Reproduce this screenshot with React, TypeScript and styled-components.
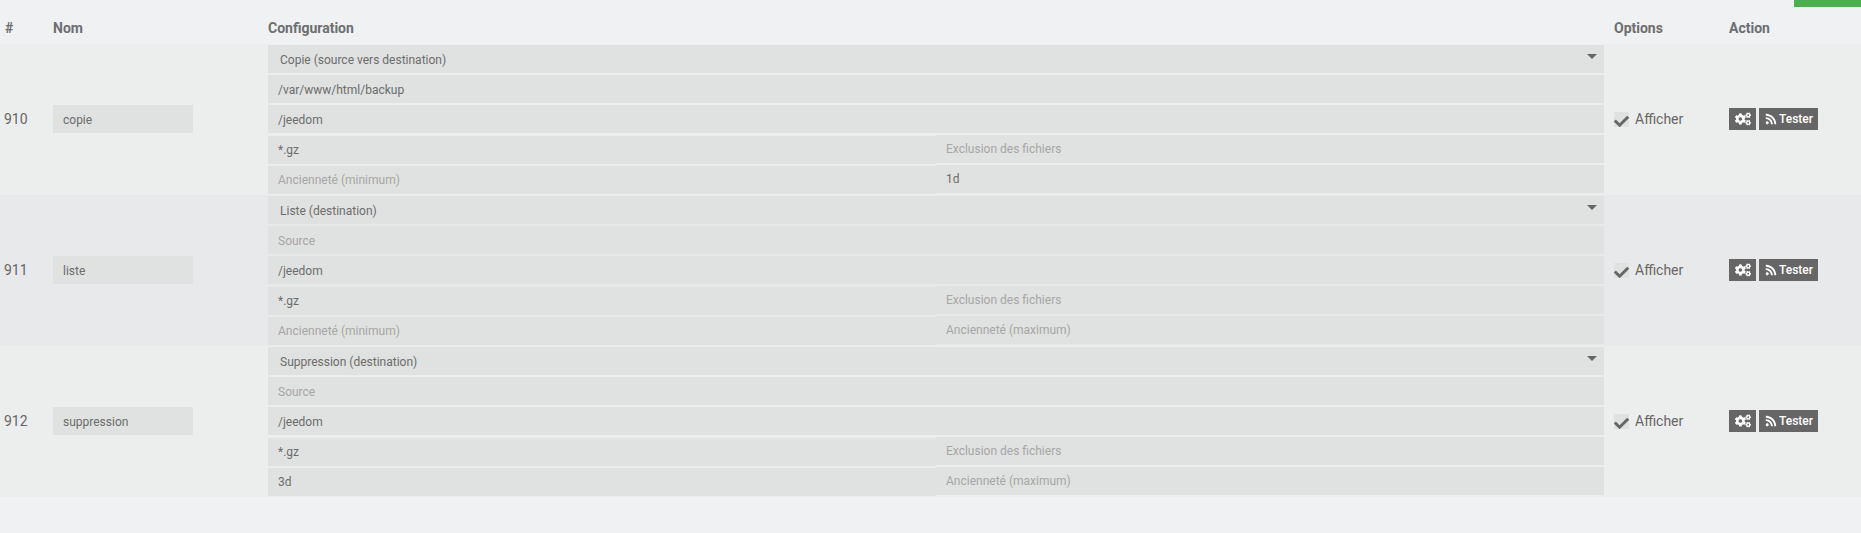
import { createGlobalStyle } from 'styled-components';
import styled from 'styled-components';
import { FaCheck, FaCogs, FaRss } from 'react-icons/fa';

const GlobalStyle = createGlobalStyle`
  html, body {
    margin: 0;
    padding: 0;
    height: 100%;
    background: #eff1f3;
    overflow: hidden;
  }
  body {
    font-family: Roboto, "Liberation Sans", sans-serif;
    color: #666;
  }
`;

const COLUMNS = '53px 215px 1346px 115px 132px';

const Page = styled.div`
  position: relative;
  width: 1861px;
  height: 533px;
`;

const GreenTab = styled.div`
  position: absolute;
  top: 0;
  right: 0;
  width: 67px;
  height: 7px;
  background: #4caf50;
`;

const HeadRow = styled.div`
  display: grid;
  grid-template-columns: ${COLUMNS};
  height: 44px;
  box-sizing: border-box;
  padding-top: 20px;
  font-size: 14px;
  line-height: 16px;
  font-weight: 700;
  color: #6e6e6e;
`;

const HeadCell = styled.div<{ $first?: boolean }>`
  padding-left: ${(p) => (p.$first ? '5px' : '0')};
`;

const Row = styled.div<{ $alt?: boolean }>`
  display: grid;
  grid-template-columns: ${COLUMNS};
  height: 151px;
  box-sizing: border-box;
  padding-bottom: 1px;
  align-items: center;
  background: ${(p) => (p.$alt ? '#e8e9ea' : '#eceeee')};
`;

const IdCell = styled.div`
  padding-left: 4px;
  font-size: 14px;
  color: #666;
`;

const Field = styled.input`
  display: block;
  box-sizing: border-box;
  width: 100%;
  height: 28px;
  margin: 0;
  padding: 1px 10px 0;
  border: 0;
  border-radius: 0;
  outline: 0;
  background: #e0e2e1;
  font-family: Roboto, "Liberation Sans", sans-serif;
  font-size: 12px;
  color: #6c6c6c;

  &::placeholder {
    color: #a6a6a6;
    opacity: 1;
  }
`;

const NameField = styled(Field)`
  width: 140px;
`;

const ConfigStack = styled.div`
  display: flex;
  flex-direction: column;
  gap: 2px;
  width: 1336px;
  height: 150px;
  box-sizing: border-box;
  padding-top: 1px;
`;

const SelectBox = styled.div`
  position: relative;
  box-sizing: border-box;
  height: 28px;
  padding: 1px 0 0 12px;
  background: #e0e2e1;
  font-size: 12px;
  line-height: 28px;
  color: #6c6c6c;
`;

const Caret = styled.span`
  position: absolute;
  top: 9px;
  right: 7px;
  width: 0;
  height: 0;
  border-left: 5px solid transparent;
  border-right: 5px solid transparent;
  border-top: 5px solid #666;
`;

const SplitLine = styled.div`
  display: grid;
  grid-template-columns: 668px 668px;
  height: 28px;
`;

const LeftField = styled(Field)`
  margin-top: 1px;
  padding-top: 0;
`;

const RightField = styled(Field)`
  padding-top: 0;
`;

const OptionLabel = styled.label`
  display: flex;
  align-items: center;
  gap: 6px;
  font-size: 14px;
  color: #666;
`;

const CheckBox = styled.span`
  position: relative;
  width: 15px;
  height: 15px;
  background: #e0e2e1;
  color: #666;

  svg {
    position: absolute;
    left: 0;
    top: 2px;
    width: 15px;
    height: 15px;
  }
`;

const ActionGroup = styled.div`
  display: flex;
  gap: 3px;
`;

const ActionButton = styled.button`
  display: flex;
  align-items: center;
  gap: 2px;
  width: 59px;
  height: 22px;
  padding: 0 0 0 6px;
  border: 0;
  border-radius: 0;
  background: #666;
  color: #fff;
  font-family: Roboto, "Liberation Sans", sans-serif;
  font-size: 12px;
  font-weight: 500;
`;

const IconButton = styled(ActionButton)`
  justify-content: center;
  width: 27px;
  padding: 0;
  font-size: 16px;
`;

type Job = {
  id: number;
  name: string;
  kind: string;
  source: string;
  destination: string;
  minAge: string;
  maxAge: string;
};

const jobs: Job[] = [
  { id: 910, name: 'copie', kind: 'Copie (source vers destination)', source: '/var/www/html/backup', destination: '/jeedom', minAge: '', maxAge: '1d' },
  { id: 911, name: 'liste', kind: 'Liste (destination)', source: '', destination: '/jeedom', minAge: '', maxAge: '' },
  { id: 912, name: 'suppression', kind: 'Suppression (destination)', source: '', destination: '/jeedom', minAge: '3d', maxAge: '' },
];

const App = () => {
  return (
    <Page>
      <GlobalStyle />
      <GreenTab />
      <HeadRow>
        <HeadCell $first>#</HeadCell>
        <HeadCell>Nom</HeadCell>
        <HeadCell>Configuration</HeadCell>
        <HeadCell>Options</HeadCell>
        <HeadCell>Action</HeadCell>
      </HeadRow>
      {jobs.map((job, i) => (
        <Row key={job.id} $alt={i === 1}>
          <IdCell>{job.id}</IdCell>
          <div>
            <NameField readOnly value={job.name} />
          </div>
          <ConfigStack>
            <SelectBox>
              {job.kind}
              <Caret />
            </SelectBox>
            <Field readOnly value={job.source} placeholder="Source" />
            <Field readOnly value={job.destination} placeholder="Destination" />
            <SplitLine>
              <LeftField readOnly value="*.gz" placeholder="Inclusion des fichiers" />
              <RightField readOnly value="" placeholder="Exclusion des fichiers" />
            </SplitLine>
            <SplitLine>
              <LeftField readOnly value={job.minAge} placeholder="Ancienneté (minimum)" />
              <RightField readOnly value={job.maxAge} placeholder="Ancienneté (maximum)" />
            </SplitLine>
          </ConfigStack>
          <OptionLabel>
            <CheckBox>
              <FaCheck />
            </CheckBox>
            Afficher
          </OptionLabel>
          <ActionGroup>
            <IconButton>
              <FaCogs />
            </IconButton>
            <ActionButton>
              <FaRss size={12} />
              Tester
            </ActionButton>
          </ActionGroup>
        </Row>
      ))}
    </Page>
  );
};

export default App;
